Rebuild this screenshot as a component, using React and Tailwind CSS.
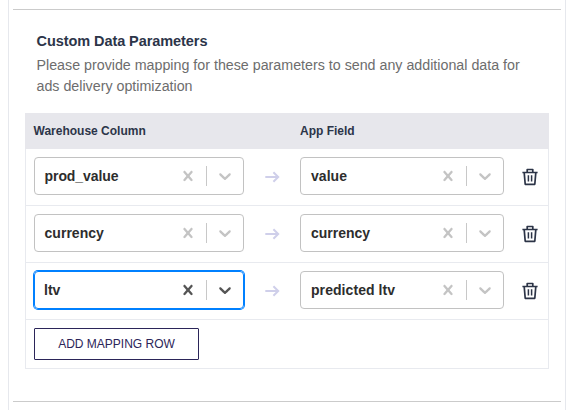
const CROSS =
  'M14.348 14.849c-0.469 0.469-1.229 0.469-1.697 0l-2.651-3.030-2.651 3.029c-0.469 0.469-1.229 0.469-1.697 0-0.469-0.469-0.469-1.229 0-1.697l2.758-3.15-2.759-3.152c-0.469-0.469-0.469-1.228 0-1.697s1.228-0.469 1.697 0l2.652 3.031 2.651-3.031c0.469-0.469 1.228-0.469 1.697 0s0.469 1.229 0 1.697l-2.758 3.152 2.758 3.15c0.469 0.469 0.469 1.229 0 1.698z';
const CHEVRON =
  'M4.516 7.548c0.436-0.446 1.043-0.481 1.576 0l3.908 3.747 3.908-3.747c0.533-0.481 1.141-0.446 1.574 0 0.436 0.445 0.408 1.197 0 1.615-0.406 0.418-4.695 4.502-4.695 4.502-0.217 0.223-0.502 0.335-0.787 0.335s-0.57-0.112-0.789-0.335c0 0-4.287-4.084-4.695-4.502s-0.436-1.17 0-1.615z';

function Indicator({ path, focused }) {
  return (
    <span className={`flex w-9 justify-center ${focused ? 'text-[#555]' : 'text-[#c4c4c4]'}`}>
      <svg width="20" height="20" viewBox="0 0 20 20" fill="currentColor">
        <path d={path} />
      </svg>
    </span>
  );
}

function Select({ value, focused, width, spacing }) {
  return (
    <div
      className={`flex h-[38px] shrink-0 items-center rounded border ${width} ${
        focused ? 'border-[#0080ff] shadow-[0_0_0_1px_#0080ff]' : 'border-[#c2c2c2]'
      }`}
    >
      <span className={`flex-1 text-[14px] leading-5 font-bold text-[#2d2d2d] ${spacing}`}>{value}</span>
      <Indicator path={CROSS} focused={focused} />
      <span className="h-5 w-px bg-[#c8c8c8]" />
      <Indicator path={CHEVRON} focused={focused} />
    </div>
  );
}

function Arrow() {
  return (
    <svg className="mt-[2px] ml-[21px] shrink-0" width="15" height="12" viewBox="0 0 15 12" fill="none" stroke="#cfcfea" strokeWidth="2">
      <path d="M0.3 6H13.2M8.4 1.2L13.2 6L8.4 10.8" />
    </svg>
  );
}

function Trash() {
  return (
    <svg className="mt-[2px] ml-[18px] shrink-0" width="16" height="18" viewBox="0 0 16 18" fill="none" stroke="#2c3447" strokeWidth="1.7">
      <path d="M0.4 4.5H15.6M5.2 4.2V1.5H10.8V4.2M2.2 4.6L3.2 16.3H12.8L13.8 4.6" strokeLinejoin="round" />
      <path d="M6.4 7.3V13.4M9.6 7.3V13.4" strokeWidth="1.5" />
    </svg>
  );
}

const rows = [
  { column: 'prod_value', field: 'value', columnSpacing: 'pl-[9.5px] tracking-[-0.06px]', fieldSpacing: 'pl-[10px] tracking-[0.05px]' },
  { column: 'currency', field: 'currency', columnSpacing: 'pl-[9.5px] tracking-[0.03px]', fieldSpacing: 'pl-[10px] tracking-[0px]' },
  { column: 'ltv', field: 'predicted ltv', focused: true, columnSpacing: 'pl-[9px] tracking-[0px]', fieldSpacing: 'pl-[10px] tracking-[0.07px]' },
];

export default function App() {
  return (
    <div className="h-[410px] w-[575px] overflow-hidden bg-white pl-2 font-['Liberation_Sans',Arial,sans-serif]">
      <div className="h-full w-[558px] border-x border-[#e6e8ed] px-1 pt-[9px]">
        <div className="h-[393px] border-y border-[#cbcbcb]">
          <div className="pt-[21px] pl-[23.5px]">
            <h2 className="text-[14.5px] leading-5 font-bold tracking-[-0.07px] text-[#2c3549]">Custom Data Parameters</h2>
            <p className="mt-1 text-[14.25px] leading-[21px] whitespace-nowrap text-[#6d6d6d]">
              Please provide mapping for these parameters to send any additional data for
              <br />
              ads delivery optimization
            </p>
          </div>
          <div className="mt-4 ml-3 h-[256px] w-[524px] border border-t-0 border-[#e8eaef]">
            <div className="-mx-px flex h-9 items-center bg-[#e7e7ec] pl-[8.5px] text-[12px] font-bold text-[#2c3549]">
              <span className="w-[266.5px]">Warehouse Column</span>
              <span>App Field</span>
            </div>
            {rows.map((row) => (
              <div key={row.column} className="flex h-[57px] items-center border-b border-[#e8eaef] pb-[2px] pl-2">
                <Select value={row.column} focused={row.focused} width="w-[210px]" spacing={row.columnSpacing} />
                <Arrow />
                <div className="ml-5">
                  <Select value={row.field} width="w-[204px]" spacing={row.fieldSpacing} />
                </div>
                <Trash />
              </div>
            ))}
            <button className="mt-2 ml-2 block h-8 w-[165px] rounded-[1px] border border-[#2b2559] text-[12px] text-[#2b2559]">
              ADD MAPPING ROW
            </button>
          </div>
        </div>
      </div>
    </div>
  );
}
